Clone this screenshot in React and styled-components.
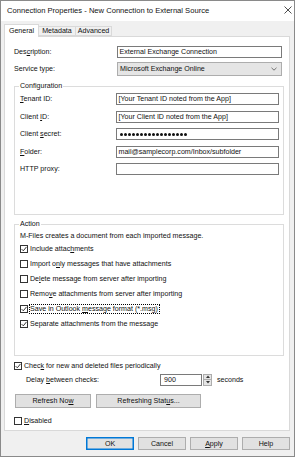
import React from 'react';
import styled, { createGlobalStyle } from 'styled-components';

const GlobalStyle = createGlobalStyle`
  html, body { margin: 0; padding: 0; background: #fff; }
  body {
    font-family: "Liberation Sans", Arial, sans-serif;
    font-size: 7.1px;
    color: #111;
  }
  * { box-sizing: border-box; }
`;

const Window = styled.div`
  width: 295px;
  height: 457px;
  border: 1px solid #8a8a8a;
  background: #f0f0f0;
  display: flex;
  flex-direction: column;
`;

const TitleBar = styled.div`
  height: 20px;
  flex: none;
  background: #fff;
  display: flex;
  align-items: center;
  justify-content: space-between;
  padding: 0 2px 2px 6px;
  font-size: 7.6px;
`;

const Body = styled.div`
  flex: 1;
  display: flex;
  flex-direction: column;
  padding: 3px 4px 0 3px;
  min-height: 0;
`;

const TabStrip = styled.div`
  height: 12px;
  flex: none;
  display: flex;
  align-items: flex-end;
  padding-left: 1px;
`;

const Tab = styled.div`
  width: ${p => p.$w}px;
  height: ${p => (p.$active ? 13 : 10)}px;
  margin-bottom: ${p => (p.$active ? -1 : 0)}px;
  margin-left: -1px;
  border: 1px solid #d9d9d9;
  border-bottom: ${p => (p.$active ? 'none' : '1px solid #d9d9d9')};
  background: ${p => (p.$active ? '#fff' : '#f0f0f0')};
  position: relative;
  z-index: ${p => (p.$active ? 2 : 1)};
  display: flex;
  align-items: center;
  justify-content: center;
  padding-bottom: ${p => (p.$active ? 1 : 0)}px;
`;

const Page = styled.div`
  flex: 1;
  background: #fff;
  border: 1px solid #d9d9d9;
  padding: 9px 5px 0 9px;
  display: flex;
  flex-direction: column;
`;

const Row = styled.div`
  display: flex;
  align-items: center;
  height: ${p => p.$h || 12}px;
  margin-top: ${p => p.$mt || 0}px;
  flex: none;
`;

const Label = styled.div`
  width: ${p => p.$w}px;
  margin-left: ${p => p.$ml || 0}px;
  flex: none;
  white-space: nowrap;
`;

const Field = styled.div`
  flex: 1;
  height: 100%;
  margin-right: ${p => p.$mr || 0}px;
  border: 1px solid #7a7a7a;
  background: #fff;
  padding-left: 1.5px;
  display: flex;
  align-items: center;
  white-space: nowrap;
  overflow: hidden;
`;

const Dots = styled.span`
  display: flex;
  gap: 1px;
  padding-left: 1px;
`;

const Dot = styled.span`
  width: 3px;
  height: 3px;
  border-radius: 50%;
  background: #111;
`;

const Select = styled.div`
  flex: 1;
  height: 100%;
  margin-right: 2px;
  border: 1px solid #adadad;
  background: #e5e5e5;
  padding: 0 4px 0 2px;
  display: flex;
  align-items: center;
  justify-content: space-between;
`;

const Group = styled.fieldset`
  margin: ${p => p.$mt}px 0 0 0;
  min-width: 0;
  border: 1px solid #dcdcdc;
  padding: ${p => p.$pad};
  display: flex;
  flex-direction: column;
  flex: none;
`;

const Legend = styled.legend`
  padding: 0 1px;
  margin-left: -1px;
  line-height: 9px;
`;

const Note = styled.div`
  line-height: 9px;
  white-space: nowrap;
`;

const CheckRow = styled.div`
  display: flex;
  align-items: center;
  height: 9px;
  gap: 2px;
  margin-top: ${p => p.$mt || 0}px;
  margin-left: ${p => p.$ml || 0}px;
  white-space: nowrap;
  flex: none;
`;

const Box = styled.span`
  width: 8px;
  height: 8px;
  flex: none;
  border: 1px solid #333;
  background: #fff;
  display: flex;
  align-items: center;
  justify-content: center;
`;

const Focus = styled.span`
  outline: 1px dotted #000;
  outline-offset: 0;
  padding: 0 1px 0 0;
  line-height: 9px;
`;

const Key = styled.span`
  text-decoration: underline;
  text-underline-offset: 1px;
`;

const SpinBox = styled.div`
  width: 42px;
  height: 100%;
  border: 1px solid #7a7a7a;
  background: #fff;
  padding-left: 3px;
  display: flex;
  align-items: center;
`;

const Spinner = styled.div`
  width: 9px;
  height: 100%;
  margin-left: 1px;
  border: 1px solid #adadad;
  background: #e5e5e5;
  display: flex;
  flex-direction: column;
`;

const SpinHalf = styled.div`
  flex: 1;
  display: flex;
  align-items: center;
  justify-content: center;
  border-top: ${p => (p.$bottom ? '1px solid #adadad' : 'none')};
`;

const Units = styled.span`
  margin-left: 5px;
`;

const ButtonRow = styled.div`
  display: flex;
  gap: 5px;
  margin: ${p => p.$m};
  flex: none;
`;

const Button = styled.div`
  width: ${p => p.$w}px;
  height: ${p => p.$h}px;
  border: 1px solid ${p => (p.$default ? '#0078d7' : '#adadad')};
  box-shadow: ${p => (p.$default ? 'inset 0 0 0 0.5px #0078d7' : 'none')};
  background: #e1e1e1;
  display: flex;
  align-items: center;
  justify-content: center;
  white-space: nowrap;
`;

const Footer = styled.div`
  height: 25px;
  flex: none;
  display: flex;
  justify-content: flex-end;
  gap: 4px;
  padding: 6px 0 0 0;
`;

function Check({ on }) {
  return (
    <Box>
      {on && (
        <svg width="6" height="6" viewBox="0 0 6 6">
          <path d="M0.6 3.1 L2.3 4.8 L5.5 0.9" fill="none" stroke="#222" strokeWidth="0.9" />
        </svg>
      )}
    </Box>
  );
}

function CheckItem({ on, ml, mt, children }) {
  return (
    <CheckRow $ml={ml} $mt={mt}>
      <Check on={on} />
      <span>{children}</span>
    </CheckRow>
  );
}

function Secret({ count }) {
  return (
    <Dots>
      {Array.from({ length: count }, (_, i) => <Dot key={i} />)}
    </Dots>
  );
}

const configRows = [
  [<><Key>T</Key>enant ID:</>, '[Your Tenant ID noted from the App]'],
  [<>Client <Key>I</Key>D:</>, '[Your Client ID noted from the App]'],
  [<>Client <Key>s</Key>ecret:</>, null],
  [<><Key>F</Key>older:</>, 'mail@samplecorp.com/Inbox/subfolder'],
  ['HTTP proxy:', ''],
];

export default function App() {
  return (
    <>
      <GlobalStyle />
      <Window>
        <TitleBar>
          <span>Connection Properties - New Connection to External Source</span>
          <svg width="8" height="8" viewBox="0 0 8 8">
            <path d="M0.5 0.5 L7.5 7.5 M7.5 0.5 L0.5 7.5" stroke="#222" strokeWidth="0.8" />
          </svg>
        </TitleBar>
        <Body>
          <TabStrip>
            <Tab $w={35} $active>General</Tab>
            <Tab $w={38}>Metadata</Tab>
            <Tab $w={37}>Advanced</Tab>
          </TabStrip>
          <Page>
            <Row>
              <Label $w={103}>Des<Key>c</Key>ription:</Label>
              <Field $mr={2}>External Exchange Connection</Field>
            </Row>
            <Row $h={14} $mt={4}>
              <Label $w={103}>Service type:</Label>
              <Select>
                <span>Microsoft Exchange Online</span>
                <svg width="6" height="4" viewBox="0 0 6 4">
                  <path d="M0.5 0.8 L3 3.2 L5.5 0.8" fill="none" stroke="#555" strokeWidth="0.8" />
                </svg>
              </Select>
            </Row>

            <Group $mt={6} $pad="2px 4px 39px 5px">
              <Legend>Configuration</Legend>
              {configRows.map(([label, value], i) => (
                <Row key={i} $mt={i === 0 ? 0 : 5.5}>
                  <Label $w={96}>{label}</Label>
                  <Field>{value === null ? <Secret count={17} /> : value}</Field>
                </Row>
              ))}
            </Group>

            <Group $mt={4.5} $pad="3px 4px 26px 5px">
              <Legend>Action</Legend>
              <Note>M-Files creates a document from each imported message.</Note>
              <CheckItem on mt={4}>Include attac<Key>h</Key>ments</CheckItem>
              <CheckItem mt={6}>Import o<Key>n</Key>ly messages that have attachments</CheckItem>
              <CheckItem mt={6}>De<Key>l</Key>ete message from server after importing</CheckItem>
              <CheckItem mt={6}>Remo<Key>v</Key>e attachments from server after importing</CheckItem>
              <CheckItem on mt={6}>
                <Focus>Save in Outlook <Key>m</Key>essage format (*.msg)</Focus>
              </CheckItem>
              <CheckItem on mt={6}>Separate attachments from the message</CheckItem>
            </Group>

            <CheckItem on mt={5.5}>Chec<Key>k</Key> for new and deleted files periodically</CheckItem>
            <Row $mt={3.5}>
              <Label $w={134} $ml={12}>Delay <Key>b</Key>etween checks:</Label>
              <SpinBox>900</SpinBox>
              <Spinner>
                <SpinHalf>
                  <svg width="4" height="3" viewBox="0 0 4 3"><path d="M0 3 L2 0.5 L4 3 Z" fill="#333" /></svg>
                </SpinHalf>
                <SpinHalf $bottom>
                  <svg width="4" height="3" viewBox="0 0 4 3"><path d="M0 0 L2 2.5 L4 0 Z" fill="#333" /></svg>
                </SpinHalf>
              </Spinner>
              <Units>seconds</Units>
            </Row>
            <ButtonRow $m="8px 0 0 1px">
              <Button $w={76} $h={14}>Refresh No<Key>w</Key></Button>
              <Button $w={105} $h={14}>Refreshing Stat<Key>u</Key>s...</Button>
            </ButtonRow>
            <CheckItem mt={8.5}><Key>D</Key>isabled</CheckItem>
          </Page>
          <Footer>
            <Button $w={48} $h={13} $default>OK</Button>
            <Button $w={48} $h={13}>Cancel</Button>
            <Button $w={48} $h={13}><Key>A</Key>pply</Button>
            <Button $w={48} $h={13}>Help</Button>
          </Footer>
        </Body>
      </Window>
    </>
  );
}
